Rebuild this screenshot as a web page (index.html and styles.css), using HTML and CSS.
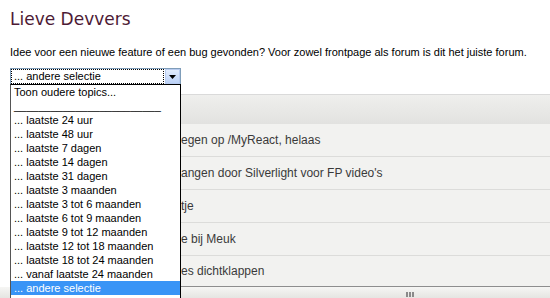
FILE: index.html
```html
<!DOCTYPE html>
<html>
<head>
<meta charset="utf-8">
<link rel="stylesheet" href="styles.css">
</head>
<body>
<div class="page">
  <h1 class="title">Lieve Devvers</h1>
  <p class="intro">Idee voor een nieuwe feature of een bug gevonden? Voor zowel frontpage als forum is dit het juiste forum.</p>
  <div class="select-wrap">
    <div class="select">
      <span class="select-value">... andere selectie</span>
      <span class="select-btn"><svg width="7" height="4" viewBox="0 0 7 4"><path d="M0 0H7L3.5 4Z" fill="#000"/></svg></span>
    </div>
    <ul class="options">
      <li>Toon oudere topics...</li>
      <li>________________________</li>
      <li>... laatste 24 uur</li>
      <li>... laatste 48 uur</li>
      <li>... laatste 7 dagen</li>
      <li>... laatste 14 dagen</li>
      <li>... laatste 31 dagen</li>
      <li>... laatste 3 maanden</li>
      <li>... laatste 3 tot 6 maanden</li>
      <li>... laatste 6 tot 9 maanden</li>
      <li>... laatste 9 tot 12 maanden</li>
      <li>... laatste 12 tot 18 maanden</li>
      <li>... laatste 18 tot 24 maanden</li>
      <li>... vanaf laatste 24 maanden</li>
      <li class="selected">... andere selectie</li>
    </ul>
  </div>
  <div class="topics">
    <div class="topics-head"></div>
    <div class="topic"><span>egen op /MyReact, helaas</span></div>
    <div class="topic"><span>angen door Silverlight voor FP video's</span></div>
    <div class="topic"><span>tje</span></div>
    <div class="topic"><span>e bij Meuk</span></div>
    <div class="topic last"><span>es dichtklappen</span></div>
  </div>
</div>
<div class="hscroll"><div class="grip"><i></i><i></i><i></i></div></div>
</body>
</html>
```
FILE: styles.css
```css
html, body { margin: 0; padding: 0; background: #fff; overflow: hidden; height: 298px; }
body { font-family: "Liberation Sans", Arial, sans-serif; }
.page { padding-left: 10px; }
.title {
  margin: 0;
  padding-top: 8px;
  font-family: "DejaVu Sans", Verdana, sans-serif;
  font-weight: normal;
  font-size: 17px;
  line-height: 22px;
  color: #4d1a35;
}
.intro {
  margin: 15px 0 0 0;
  font-size: 11px;
  line-height: 14px;
  color: #000;
}
.select-wrap { position: relative; margin-top: 9px; width: 171px; z-index: 2; }
.select {
  box-sizing: border-box;
  height: 17px;
  width: 171px;
  border: 1px solid #7f9db9;
  display: flex;
  align-items: stretch;
  background: #fff;
}
.select-value {
  flex: 1;
  border: 1px dotted #000;
  font-size: 11px;
  line-height: 13px;
  padding-left: 2px;
  margin-right: 1px;
}
.select-btn {
  width: 15px;
  display: flex;
  align-items: center;
  justify-content: center;
  background: linear-gradient(#e2ecfd, #bcd2f7);
  border: 1px solid #b7cbef;
  box-sizing: border-box;
  padding-top: 1px;
}
.options {
  position: absolute;
  left: 0;
  top: 16px;
  width: 171px;
  box-sizing: border-box;
  margin: 0;
  padding: 0 0 4px 0;
  list-style: none;
  background: #fff;
  border: 1px solid #000;
  border-left-color: #555;
}
.options li {
  height: 14px;
  line-height: 14px;
  font-size: 11px;
  padding-left: 3px;
  white-space: nowrap;
  color: #000;
}
.options li.selected { background: #3994f6; color: #fff; }
.topics { margin-top: 9px; width: 540px; }
.topics-head {
  height: 30px;
  border-top: 1px solid #dadada;
  background: linear-gradient(#efefed, #e2e2e0);
  box-sizing: border-box;
}
.topic {
  height: 33px;
  box-sizing: border-box;
  border-bottom: 1px solid #dcdcda;
  background: #f2f2f0;
  display: flex;
  align-items: center;
  padding-left: 171px;
  font-size: 12px;
  color: #3a3a3a;
}
.topic.last { height: 31px; border-bottom: 1px solid #8e8e8e; }
.hscroll {
  height: 17px;
  background: linear-gradient(#f6f6f4, #dcdcd8);
  display: flex;
  justify-content: flex-start;
  padding-left: 406px;
}
.grip { display: flex; gap: 1px; padding-top: 5px; }
.grip i { display: block; width: 2px; height: 5px; background: #8a8a8a; }
```
